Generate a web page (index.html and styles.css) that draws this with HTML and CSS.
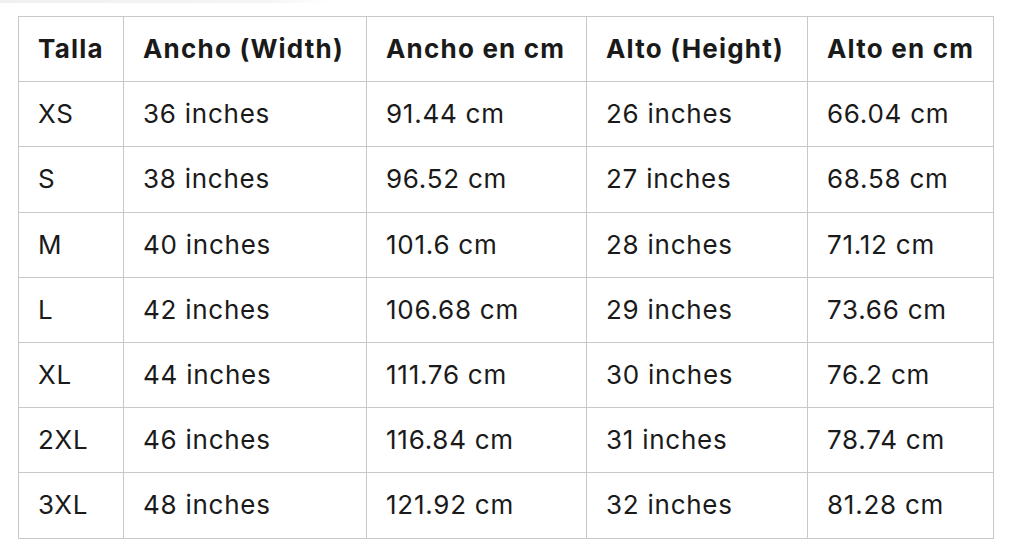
FILE: index.html
```html
<!DOCTYPE html>
<html lang="es">
<head>
<meta charset="utf-8">
<link rel="stylesheet" href="styles.css">
</head>
<body>
<div class="topfade"></div>
<div class="wrap">
<table class="sizes">
  <colgroup>
    <col class="c1"><col class="c2"><col class="c3"><col class="c4"><col class="c5">
  </colgroup>
  <thead>
    <tr><th>Talla</th><th>Ancho (Width)</th><th>Ancho en cm</th><th>Alto (Height)</th><th>Alto en cm</th></tr>
  </thead>
  <tbody>
    <tr><td>XS</td><td>36 inches</td><td>91.44 cm</td><td>26 inches</td><td>66.04 cm</td></tr>
    <tr><td>S</td><td>38 inches</td><td>96.52 cm</td><td>27 inches</td><td>68.58 cm</td></tr>
    <tr><td>M</td><td>40 inches</td><td>101.6 cm</td><td>28 inches</td><td>71.12 cm</td></tr>
    <tr><td>L</td><td>42 inches</td><td>106.68 cm</td><td>29 inches</td><td>73.66 cm</td></tr>
    <tr><td>XL</td><td>44 inches</td><td>111.76 cm</td><td>30 inches</td><td>76.2 cm</td></tr>
    <tr><td>2XL</td><td>46 inches</td><td>116.84 cm</td><td>31 inches</td><td>78.74 cm</td></tr>
    <tr><td>3XL</td><td>48 inches</td><td>121.92 cm</td><td>32 inches</td><td>81.28 cm</td></tr>
  </tbody>
</table>
</div>
</body>
</html>
```

FILE: styles.css
```css
html, body {
  margin: 0;
  padding: 0;
  background: #ffffff;
}
body {
  width: 1024px;
  height: 559px;
  overflow: hidden;
  position: relative;
  font-family: Inter, "Liberation Sans", sans-serif;
  color: #1a1a1a;
}
.topfade {
  position: absolute;
  left: 0;
  top: 0;
  width: 330px;
  height: 3px;
  background: linear-gradient(to right, #f0f0f0, #f4f4f4 80%, #ffffff);
}
.wrap {
  padding: 16px 0 0 18px;
}
.sizes {
  border-collapse: collapse;
  table-layout: fixed;
  width: 975px;
}
.c1 { width: 105px; }
.c2 { width: 243px; }
.c3 { width: 220px; }
.c4 { width: 221px; }
.c5 { width: 186px; }
.sizes th, .sizes td {
  border: 1px solid #c8c8c8;
  height: 64.2px;
  padding: 0 0 0 19px;
  text-align: left;
  font-size: 26px;
  line-height: 30px;
  vertical-align: middle;
  white-space: nowrap;
}
.sizes th {
  font-weight: 700;
  letter-spacing: 1.2px;
}
.sizes td {
  font-weight: 400;
  letter-spacing: 0.75px;
}
```
